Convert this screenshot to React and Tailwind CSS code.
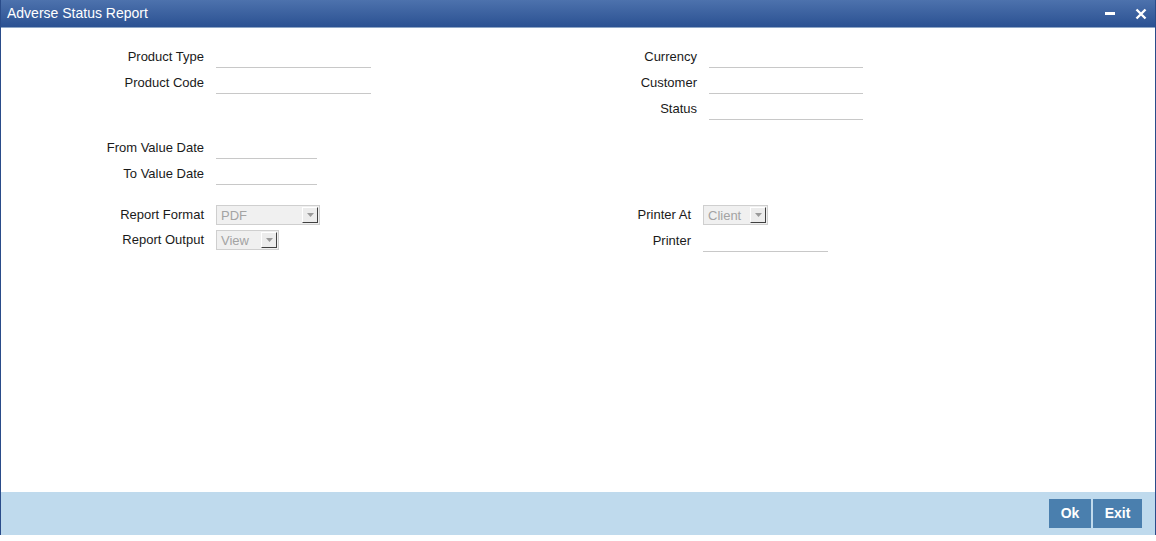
import React from 'react'

const font = { fontFamily: '"Liberation Sans", Arial, sans-serif' }

function TextRow({ label, labelW, gap, inputW }) {
  return (
    <div className="flex h-[26px] items-center">
      <div className={`${labelW} text-right text-[13px] text-[#1a1a1a]`}>{label}</div>
      <div className={`${gap} ${inputW} h-[22px] border-b border-[#c8c8c8]`} />
    </div>
  )
}

function Select({ value, width }) {
  return (
    <div className={`${width} flex h-[20px] items-center justify-between border border-[#cfcfcf] bg-[#f0f0f0] pl-[4px] pr-[1px]`}>
      <span className="text-[13px] leading-none text-[#a3a3a3]">{value}</span>
      <span className="flex h-[16px] w-[16px] items-center justify-center border-t border-l border-white border-r border-b border-r-[#404040] border-b-[#404040] bg-[#ececec]">
        <svg width="7" height="4" viewBox="0 0 7 4">
          <path d="M0 0h7L3.5 4z" fill="#9a9a9a" />
        </svg>
      </span>
    </div>
  )
}

export default function App() {
  return (
    <div className="h-[541px] w-[1156px] bg-white" style={font}>
      <div className="flex h-[535px] flex-col border-x border-[#2a4c8a]">
        {/* Title bar */}
        <div className="flex h-[28px] items-center justify-between border-b border-[#8ea6c6] bg-gradient-to-b from-[#4d72ad] to-[#2b5192] pl-[6px] pr-[8px]">
          <span className="text-[14px] text-white">Adverse Status Report</span>
          <div className="flex items-center gap-[20px]">
            <svg width="10" height="4" viewBox="0 0 10 4">
              <rect width="10" height="3" fill="white" />
            </svg>
            <svg width="12" height="12" viewBox="0 0 12 12">
              <path d="M1.5 1.5l9 9M10.5 1.5l-9 9" stroke="white" strokeWidth="2.4" />
            </svg>
          </div>
        </div>

        {/* Form body */}
        <div className="flex-1 pt-[16px]">
          <div className="flex">
            <div className="w-[499px]">
              <TextRow label="Product Type" labelW="w-[203px]" gap="ml-[12px]" inputW="w-[155px]" />
              <TextRow label="Product Code" labelW="w-[203px]" gap="ml-[12px]" inputW="w-[155px]" />
            </div>
            <div>
              <TextRow label="Currency" labelW="w-[197px]" gap="ml-[12px]" inputW="w-[154px]" />
              <TextRow label="Customer" labelW="w-[197px]" gap="ml-[12px]" inputW="w-[154px]" />
              <TextRow label="Status" labelW="w-[197px]" gap="ml-[12px]" inputW="w-[154px]" />
            </div>
          </div>

          <div className="mt-[13px]">
            <TextRow label="From Value Date" labelW="w-[203px]" gap="ml-[12px]" inputW="w-[101px]" />
            <TextRow label="To Value Date" labelW="w-[203px]" gap="ml-[12px]" inputW="w-[101px]" />
          </div>

          <div className="mt-[15px] flex">
            <div className="w-[499px]">
              <div className="flex h-[26px] items-center">
                <div className="w-[203px] text-right text-[13px] text-[#1a1a1a]">Report Format</div>
                <div className="ml-[12px]"><Select value="PDF" width="w-[104px]" /></div>
              </div>
              <div className="flex h-[24px] items-center">
                <div className="w-[203px] text-right text-[13px] text-[#1a1a1a]">Report Output</div>
                <div className="ml-[12px]"><Select value="View" width="w-[63px]" /></div>
              </div>
            </div>
            <div>
              <div className="flex h-[26px] items-center">
                <div className="w-[191px] text-right text-[13px] text-[#1a1a1a]">Printer At</div>
                <div className="ml-[12px]"><Select value="Client" width="w-[65px]" /></div>
              </div>
              <TextRow label="Printer" labelW="w-[191px]" gap="ml-[12px]" inputW="w-[125px]" />
            </div>
          </div>
        </div>

        {/* Footer */}
        <div className="flex h-[43px] items-center justify-end gap-[2px] bg-[#bfdaed] pr-[13px]">
          <button className="h-[29px] w-[42px] bg-[#4a7fae] text-[14px] font-bold text-white">Ok</button>
          <button className="h-[29px] w-[49px] bg-[#4a7fae] text-[14px] font-bold text-white">Exit</button>
        </div>
      </div>
    </div>
  )
}
